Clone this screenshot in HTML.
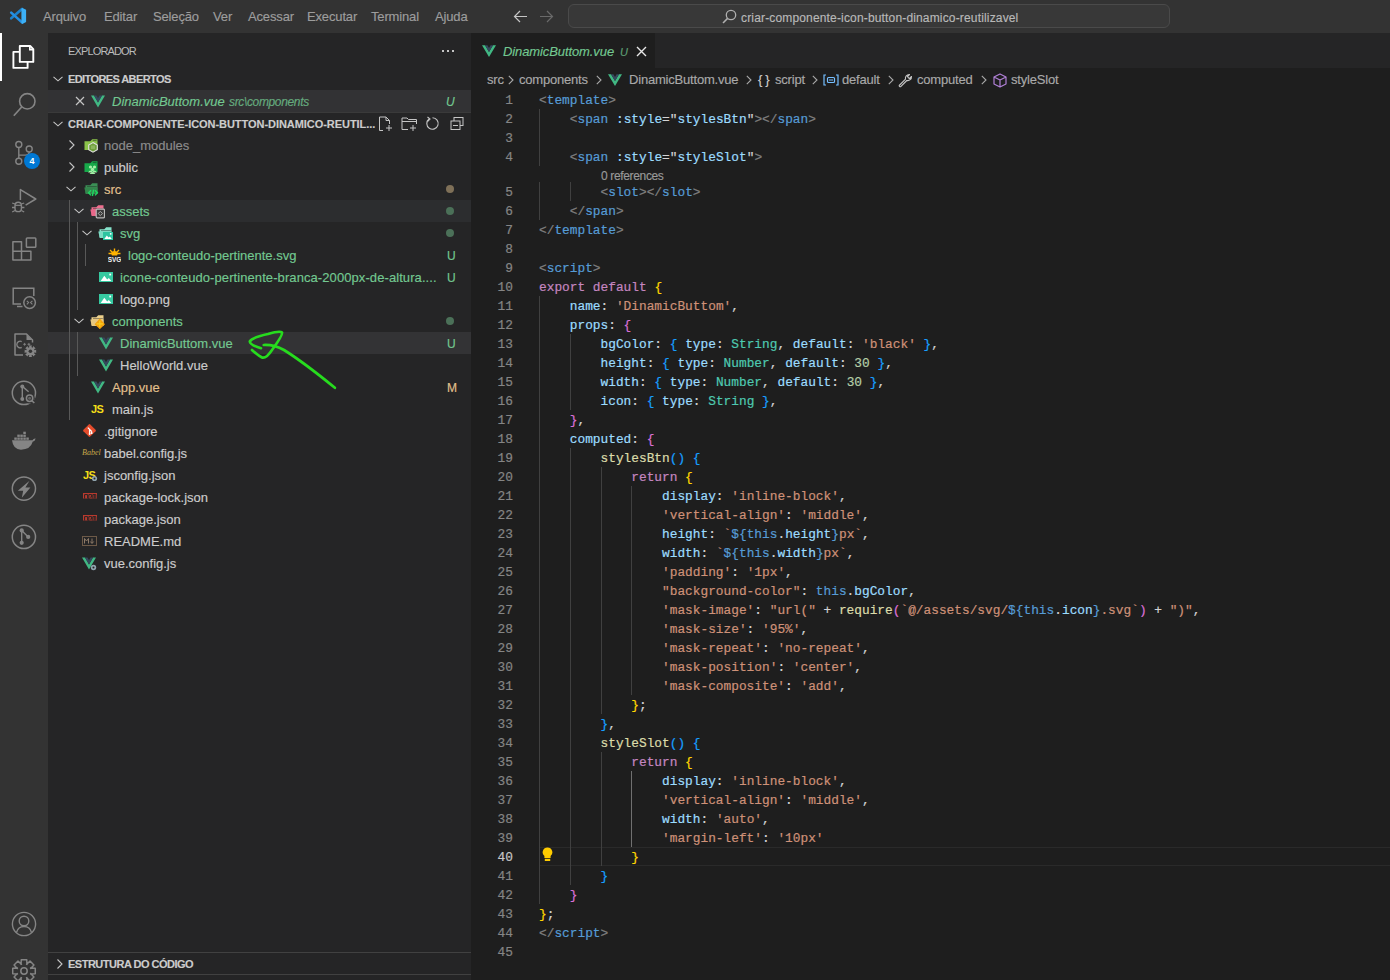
<!DOCTYPE html>
<html><head><meta charset="utf-8"><title>VS Code</title>
<style>
*{margin:0;padding:0;box-sizing:border-box}
html,body{width:1390px;height:980px;overflow:hidden;background:#1e1e1e;font-family:"Liberation Sans",sans-serif;position:relative}
div,span.a{position:absolute}
#title{left:0;top:0;width:1390px;height:33px;background:#333333}
#act{left:0;top:33px;width:48px;height:947px;background:#333333}
#side{left:48px;top:33px;width:423px;height:947px;background:#252526}
#tabs{left:471px;top:33px;width:919px;height:35px;background:#252526}
#editor{left:471px;top:68px;width:919px;height:912px;background:#1e1e1e}
#code{left:0;top:0;width:1390px;height:980px}
.cl{left:539px;height:19px;line-height:19px;font-family:"Liberation Mono",monospace;font-size:12.825px;color:#d4d4d4;white-space:pre}
.ln{left:479px;width:34px;text-align:right;height:19px;line-height:19px;font-family:"Liberation Mono",monospace;font-size:12.825px;color:#858585;white-space:pre}
.ln.act{color:#c6c6c6}
.ig{width:1px;background:#404040}
.iga{background:#707070}
.p{color:#808080}.tg{color:#569cd6}.at{color:#9cdcfe}.s{color:#ce9178}.kw{color:#c586c0}.pr{color:#9cdcfe}.ty{color:#4ec9b0}.n{color:#b5cea8}.fn{color:#dcdcaa}.b1{color:#ffd700}.b2{color:#da70d6}.b3{color:#179fff}.th{color:#569cd6}

.cl,.ln{-webkit-text-stroke:0.2px currentColor}
.tx{-webkit-text-stroke:0.15px currentColor}

</style></head>
<body>
<div id="title"></div>
<div id="act"></div>
<div id="side"></div>
<div id="tabs"></div>
<div id="editor"></div>
<svg style="position:absolute;left:5px;top:4px" width="26" height="24" viewBox="5 4 26 24"><path d="M11.2 18.3 L22 8.9" stroke="#1c82cc" stroke-width="2.6" stroke-linecap="round"/><path d="M11.2 12.6 L22 22.4" stroke="#2490e4" stroke-width="2.6" stroke-linecap="round"/><path d="M21.4 8.9 L22.4 7.9 L26.1 9.8 V22 L22.4 23.9 L21.4 23 Z" fill="#3cb0f6"/></svg>
<div class="tx" style="left:43px;top:7px;height:20px;line-height:20px;font-size:13px;color:#9d9d9d;white-space:pre;letter-spacing:-0.15px;">Arquivo</div>
<div class="tx" style="left:104px;top:7px;height:20px;line-height:20px;font-size:13px;color:#9d9d9d;white-space:pre;letter-spacing:-0.15px;">Editar</div>
<div class="tx" style="left:153px;top:7px;height:20px;line-height:20px;font-size:13px;color:#9d9d9d;white-space:pre;letter-spacing:-0.15px;">Seleção</div>
<div class="tx" style="left:213px;top:7px;height:20px;line-height:20px;font-size:13px;color:#9d9d9d;white-space:pre;letter-spacing:-0.15px;">Ver</div>
<div class="tx" style="left:248px;top:7px;height:20px;line-height:20px;font-size:13px;color:#9d9d9d;white-space:pre;letter-spacing:-0.15px;">Acessar</div>
<div class="tx" style="left:307px;top:7px;height:20px;line-height:20px;font-size:13px;color:#9d9d9d;white-space:pre;letter-spacing:-0.15px;">Executar</div>
<div class="tx" style="left:371px;top:7px;height:20px;line-height:20px;font-size:13px;color:#9d9d9d;white-space:pre;letter-spacing:-0.15px;">Terminal</div>
<div class="tx" style="left:435px;top:7px;height:20px;line-height:20px;font-size:13px;color:#9d9d9d;white-space:pre;letter-spacing:-0.15px;">Ajuda</div>
<svg style="position:absolute;left:513px;top:10px" width="15" height="13" viewBox="0 0 15 13"><path d="M7 1 L1.5 6.5 L7 12 M1.5 6.5 H14" fill="none" stroke="#c5c5c5" stroke-width="1.2"/></svg>
<svg style="position:absolute;left:539px;top:10px" width="15" height="13" viewBox="0 0 15 13"><path d="M8 1 L13.5 6.5 L8 12 M13.5 6.5 H1" fill="none" stroke="#6a6a6a" stroke-width="1.2"/></svg>
<div style="left:568px;top:4px;width:602px;height:24px;border:1px solid #4a4a4a;border-radius:6px;background:#383838"></div>
<svg style="position:absolute;left:722px;top:9px" width="15" height="15" viewBox="0 0 15 15"><circle cx="9" cy="6" r="4.7" fill="none" stroke="#b0b0b0" stroke-width="1.3"/><path d="M5.6 9.4 L1 14" stroke="#b0b0b0" stroke-width="1.5"/></svg>
<div class="tx" style="left:741px;top:8px;height:20px;line-height:20px;font-size:12px;color:#b8b8b8;white-space:pre;letter-spacing:0.16px;">criar-componente-icon-button-dinamico-reutilizavel</div>
<div style="left:0;top:33px;width:2px;height:48px;background:#ffffff"></div>
<svg style="position:absolute;left:12px;top:45px" width="24" height="25" viewBox="0 0 24 25"><path d="M7.8 1 H18.2 L21.3 4.1 V16.9 H7.8 Z" fill="none" stroke="#fff" stroke-width="1.9" stroke-linejoin="round"/><path d="M17.8 1.5 V4.6 H21" fill="none" stroke="#fff" stroke-width="1.6"/><path d="M7.8 6.9 H1.4 V22.9 H15.6 V16.9" fill="none" stroke="#fff" stroke-width="1.9" stroke-linejoin="round"/></svg>
<svg style="position:absolute;left:12px;top:90px" width="26" height="28" viewBox="0 0 26 28"><circle cx="15.3" cy="11.3" r="7.7" fill="none" stroke="#858585" stroke-width="1.6"/><path d="M9.9 16.7 L1.8 25.8" stroke="#858585" stroke-width="1.7"/></svg>
<svg style="position:absolute;left:10px;top:138px" width="30" height="30" viewBox="0 0 30 30"><circle cx="8.8" cy="6.5" r="3" fill="none" stroke="#858585" stroke-width="1.4"/><circle cx="8.8" cy="23.3" r="3" fill="none" stroke="#858585" stroke-width="1.4"/><circle cx="19.2" cy="11" r="3" fill="none" stroke="#858585" stroke-width="1.4"/><path d="M8.8 9.5 V20.3 M8.8 17.1 H15.5 Q19.2 17.1 19.2 14" fill="none" stroke="#858585" stroke-width="1.4"/></svg>
<div style="left:24px;top:153px;width:16px;height:16px;border-radius:8px;background:#0078d4;color:#fff;font-size:9px;font-weight:bold;line-height:16px;text-align:center">4</div>
<svg style="position:absolute;left:10px;top:186px" width="28" height="28" viewBox="0 0 28 28"><path d="M10.4 14 V3.6 L25.8 13 L15.6 19.2" fill="none" stroke="#858585" stroke-width="1.5" stroke-linejoin="round"/><rect x="5" y="16.2" width="6.4" height="9.4" rx="3.2" fill="none" stroke="#858585" stroke-width="1.4"/><path d="M5 19.3 H11.4" stroke="#858585" stroke-width="1.2"/><path d="M2.2 17 L5 18 M14.2 17 L11.4 18 M2 21.5 H5 M14.4 21.5 H11.4 M2.2 26 L5 24.5 M14.2 26 L11.4 24.5" stroke="#858585" stroke-width="1.3"/></svg>
<svg style="position:absolute;left:11px;top:236px" width="27" height="26" viewBox="0 0 27 26"><path d="M1.9 5.7 H10.5 V15.2 H19.9 V24 H1.9 Z M1.9 15.2 H10.5 V24" fill="none" stroke="#858585" stroke-width="1.5" stroke-linejoin="round"/><rect x="15.4" y="1.9" width="9.4" height="9.4" rx="0.8" fill="none" stroke="#858585" stroke-width="1.5"/></svg>
<svg style="position:absolute;left:11px;top:286px" width="26" height="24" viewBox="0 0 26 24"><path d="M10 18 H2.2 V2.2 H22.8 V10" fill="none" stroke="#858585" stroke-width="1.5"/><path d="M6 20.5 H11.5" stroke="#858585" stroke-width="1.5"/><circle cx="18.6" cy="16.6" r="5.8" fill="#333333" stroke="#858585" stroke-width="1.5"/><path d="M15.8 14.8 L17.6 16.6 L15.8 18.4 M21.4 14.8 L19.6 16.6 L21.4 18.4" fill="none" stroke="#858585" stroke-width="1.1"/></svg>
<svg style="position:absolute;left:13px;top:332px" width="24" height="26" viewBox="0 0 24 26"><path d="M10 23 H2 V2 H13.5 L19.5 8 V10.5" fill="none" stroke="#858585" stroke-width="1.5" stroke-linejoin="round"/><path d="M13.5 2.5 V8 H19" fill="#858585"/><path d="M8.7 9.6 A3.3 3.3 0 1 0 8.7 15.4" fill="none" stroke="#858585" stroke-width="1.3"/><path d="M10.2 12.3 H13 M11.6 10.9 V13.7 M14.5 12.3 H17.3 M15.9 10.9 V13.7" stroke="#858585" stroke-width="0.9"/><path d="M16.44 15.11 L15.74 13.53 L19.06 13.53 L18.36 15.11 L19.69 15.66 L20.30 14.05 L22.65 16.40 L21.04 17.01 L21.59 18.34 L23.17 17.64 L23.17 20.96 L21.59 20.26 L21.04 21.59 L22.65 22.20 L20.30 24.55 L19.69 22.94 L18.36 23.49 L19.06 25.07 L15.74 25.07 L16.44 23.49 L15.11 22.94 L14.50 24.55 L12.15 22.20 L13.76 21.59 L13.21 20.26 L11.63 20.96 L11.63 17.64 L13.21 18.34 L13.76 17.01 L12.15 16.40 L14.50 14.05 L15.11 15.66 Z" fill="#858585"/><circle cx="17.4" cy="19.3" r="1.8" fill="#333333"/></svg>
<svg style="position:absolute;left:11px;top:380px" width="27" height="27" viewBox="0 0 27 27"><circle cx="12.9" cy="12.9" r="11.6" fill="none" stroke="#858585" stroke-width="1.5"/><circle cx="11.3" cy="6.4" r="2" fill="#858585"/><circle cx="11.3" cy="19" r="2" fill="#858585"/><path d="M11.3 6.4 V19 M11.3 6.4 L17.6 11.8" stroke="#858585" stroke-width="1.4"/><circle cx="18.6" cy="18.2" r="5.2" fill="#333333"/><circle cx="18.6" cy="18.2" r="3.2" fill="none" stroke="#858585" stroke-width="1.5"/><circle cx="18.6" cy="18.2" r="1.5" fill="#858585" opacity="0.6"/><path d="M21 20.7 L23.3 23" stroke="#858585" stroke-width="1.6"/></svg>
<svg style="position:absolute;left:11px;top:431px" width="26" height="20" viewBox="0 0 26 20"><path d="M1 9.3 H21.5 Q22.5 7.2 24.6 7.5 L23.8 9.6 Q22.8 10.6 21.8 10.6 Q19.5 18.7 10 18.7 Q2.2 18.7 1 9.3 Z" fill="#858585"/><g fill="#858585"><rect x="3.3" y="6.5" width="2.5" height="2.3"/><rect x="6.3" y="6.5" width="2.5" height="2.3"/><rect x="9.3" y="6.5" width="2.5" height="2.3"/><rect x="12.3" y="6.5" width="2.5" height="2.3"/><rect x="15.3" y="6.5" width="2.5" height="2.3"/><rect x="6.3" y="3.6" width="2.5" height="2.3"/><rect x="9.3" y="3.6" width="2.5" height="2.3"/><rect x="12.3" y="3.6" width="2.5" height="2.3"/><rect x="12.3" y="0.7" width="2.5" height="2.3"/></g></svg>
<svg style="position:absolute;left:11px;top:476px" width="26" height="26" viewBox="0 0 26 26"><circle cx="12.9" cy="12.6" r="11.6" fill="none" stroke="#858585" stroke-width="1.5"/><path d="M18.5 4.8 L6.8 14.8 H12.2 L10.8 21.8 L19.4 11.6 H14.4 Z" fill="#858585"/></svg>
<svg style="position:absolute;left:11px;top:524px" width="26" height="26" viewBox="0 0 26 26"><circle cx="12.9" cy="12.9" r="11.6" fill="none" stroke="#858585" stroke-width="1.5"/><circle cx="10.7" cy="6.4" r="2.1" fill="#858585"/><circle cx="10.7" cy="18.8" r="2.1" fill="#858585"/><circle cx="17.2" cy="12.9" r="2.1" fill="#858585"/><path d="M10.7 6.4 V18.8 M10.7 6.4 L17.2 12.9" stroke="#858585" stroke-width="1.4"/></svg>
<svg style="position:absolute;left:11px;top:911px" width="26" height="26" viewBox="0 0 26 26"><circle cx="13" cy="13" r="11.6" fill="none" stroke="#858585" stroke-width="1.4"/><circle cx="13" cy="10" r="4.8" fill="none" stroke="#858585" stroke-width="1.4"/><path d="M5.5 21.5 Q7 15.5 13 15.5 Q19 15.5 20.5 21.5" fill="none" stroke="#858585" stroke-width="1.4"/></svg>
<svg style="position:absolute;left:11px;top:958px" width="26" height="26" viewBox="0 0 26 26"><path d="M19.57 10.06 L24.27 10.24 L24.27 15.76 L19.57 15.94 L19.65 15.76 L19.72 15.57 L22.92 19.02 L19.02 22.92 L15.57 19.72 L15.76 19.65 L15.94 19.57 L15.76 24.27 L10.24 24.27 L10.06 19.57 L10.24 19.65 L10.43 19.72 L6.98 22.92 L3.08 19.02 L6.28 15.57 L6.35 15.76 L6.43 15.94 L1.73 15.76 L1.73 10.24 L6.43 10.06 L6.35 10.24 L6.28 10.43 L3.08 6.98 L6.98 3.08 L10.43 6.28 L10.24 6.35 L10.06 6.43 L10.24 1.73 L15.76 1.73 L15.94 6.43 L15.76 6.35 L15.57 6.28 L19.02 3.08 L22.92 6.98 L19.72 10.43 L19.65 10.24 Z" fill="none" stroke="#858585" stroke-width="1.5" stroke-linejoin="round"/><circle cx="13" cy="13" r="3.2" fill="none" stroke="#858585" stroke-width="1.5"/></svg>
<div style="left:471px;top:33px;width:184px;height:35px;background:#1e1e1e"></div>
<svg style="position:absolute;left:482px;top:45px" width="14" height="12" viewBox="0 0 14 12"><path d="M0 0.3 H3 L7 7 L11 0.3 H14 L7 12 Z" fill="#41b883"/><path d="M3 0.3 H5.4 L7 3 L8.6 0.3 H11 L7 7 Z" fill="#35495e"/></svg>
<div class="tx" style="left:503px;top:42px;height:20px;line-height:20px;font-size:13px;color:#73c991;white-space:pre;font-style:italic;letter-spacing:-0.1px;">DinamicButtom.vue</div>
<div class="tx" style="left:620px;top:42px;height:20px;line-height:20px;font-size:11px;color:#73c991;white-space:pre;font-style:italic;opacity:0.75;">U</div>
<svg style="position:absolute;left:636px;top:46px" width="11" height="11" viewBox="0 0 11 11"><path d="M1 1 L10 10 M10 1 L1 10" stroke="#e8e8e8" stroke-width="1.4"/></svg>
<div class="tx" style="left:487px;top:70px;height:20px;line-height:20px;font-size:13px;color:#a9a9a9;white-space:pre;letter-spacing:-0.2px;">src</div>
<svg style="position:absolute;left:508px;top:75px" width="6" height="10" viewBox="0 0 6 10"><path d="M0.8 0.8 L5 5 L0.8 9.2" fill="none" stroke="#a9a9a9" stroke-width="1.1"/></svg>
<div class="tx" style="left:519px;top:70px;height:20px;line-height:20px;font-size:13px;color:#a9a9a9;white-space:pre;letter-spacing:-0.2px;">components</div>
<svg style="position:absolute;left:596px;top:75px" width="6" height="10" viewBox="0 0 6 10"><path d="M0.8 0.8 L5 5 L0.8 9.2" fill="none" stroke="#a9a9a9" stroke-width="1.1"/></svg>
<svg style="position:absolute;left:608px;top:74px" width="14" height="12" viewBox="0 0 14 12"><path d="M0 0.3 H3 L7 7 L11 0.3 H14 L7 12 Z" fill="#41b883"/><path d="M3 0.3 H5.4 L7 3 L8.6 0.3 H11 L7 7 Z" fill="#35495e"/></svg>
<div class="tx" style="left:629px;top:70px;height:20px;line-height:20px;font-size:13px;color:#a9a9a9;white-space:pre;letter-spacing:-0.2px;">DinamicButtom.vue</div>
<svg style="position:absolute;left:746px;top:75px" width="6" height="10" viewBox="0 0 6 10"><path d="M0.8 0.8 L5 5 L0.8 9.2" fill="none" stroke="#a9a9a9" stroke-width="1.1"/></svg>
<div class="tx" style="left:758px;top:70px;height:20px;line-height:20px;font-size:13px;color:#d0d0d0;white-space:pre;letter-spacing:-0.3px;">{ }</div>
<div class="tx" style="left:775px;top:70px;height:20px;line-height:20px;font-size:13px;color:#a9a9a9;white-space:pre;letter-spacing:-0.2px;">script</div>
<svg style="position:absolute;left:812px;top:75px" width="6" height="10" viewBox="0 0 6 10"><path d="M0.8 0.8 L5 5 L0.8 9.2" fill="none" stroke="#a9a9a9" stroke-width="1.1"/></svg>
<svg style="position:absolute;left:823px;top:74px" width="16" height="12" viewBox="0 0 16 12"><path d="M3 1 H1 V11 H3 M13 1 H15 V11 H13" fill="none" stroke="#75beff" stroke-width="1.2"/><rect x="4.5" y="3.5" width="7" height="5" rx="1" fill="none" stroke="#75beff" stroke-width="1.2"/><path d="M6 6 H10" stroke="#75beff"/></svg>
<div class="tx" style="left:842px;top:70px;height:20px;line-height:20px;font-size:13px;color:#a9a9a9;white-space:pre;letter-spacing:-0.2px;">default</div>
<svg style="position:absolute;left:888px;top:75px" width="6" height="10" viewBox="0 0 6 10"><path d="M0.8 0.8 L5 5 L0.8 9.2" fill="none" stroke="#a9a9a9" stroke-width="1.1"/></svg>
<svg style="position:absolute;left:898px;top:73px" width="15" height="15" viewBox="0 0 15 15"><path d="M13.5 3.5 A3.8 3.8 0 0 1 8.8 7.5 L2.5 13.8 A1.2 1.2 0 0 1 1.2 12.5 L7.5 6.2 A3.8 3.8 0 0 1 11.5 1.5 L9.5 3.5 L10.3 4.7 L11.5 5.5 Z" fill="none" stroke="#c5c5c5" stroke-width="1.1" stroke-linejoin="round"/></svg>
<div class="tx" style="left:917px;top:70px;height:20px;line-height:20px;font-size:13px;color:#a9a9a9;white-space:pre;letter-spacing:-0.2px;">computed</div>
<svg style="position:absolute;left:981px;top:75px" width="6" height="10" viewBox="0 0 6 10"><path d="M0.8 0.8 L5 5 L0.8 9.2" fill="none" stroke="#a9a9a9" stroke-width="1.1"/></svg>
<svg style="position:absolute;left:993px;top:73px" width="14" height="15" viewBox="0 0 14 15"><path d="M7 1 L13 4 V11 L7 14 L1 11 V4 Z M1 4 L7 7 L13 4 M7 7 V14" fill="none" stroke="#b180d7" stroke-width="1.2" stroke-linejoin="round"/></svg>
<div class="tx" style="left:1011px;top:70px;height:20px;line-height:20px;font-size:13px;color:#a9a9a9;white-space:pre;letter-spacing:-0.2px;">styleSlot</div>
<div class="tx" style="left:601px;top:166px;height:20px;line-height:20px;font-size:12px;color:#999999;white-space:pre;letter-spacing:-0.35px;">0 references</div>
<div style="left:539px;top:847px;width:851px;height:19px;border-top:1px solid #2a2a2a;border-bottom:1px solid #2a2a2a"></div>
<svg style="position:absolute;left:542px;top:847px" width="11" height="15" viewBox="0 0 11 15"><path d="M5.5 0.5 A4.8 4.8 0 0 1 8.6 9 V11 H2.4 V9 A4.8 4.8 0 0 1 5.5 0.5 Z" fill="#ffcc00"/><rect x="2.8" y="11.8" width="5.4" height="2.2" fill="#ffcc00"/></svg>
<div class="tx" style="left:68px;top:41px;height:20px;line-height:20px;font-size:11px;color:#bbbbbb;white-space:pre;letter-spacing:-0.85px;-webkit-text-stroke:0;">EXPLORADOR</div>
<div style="left:442px;top:50px;width:2px;height:2px;background:#c5c5c5"></div>
<div style="left:447px;top:50px;width:2px;height:2px;background:#c5c5c5"></div>
<div style="left:452px;top:50px;width:2px;height:2px;background:#c5c5c5"></div>
<svg style="position:absolute;left:53px;top:76px" width="10" height="6" viewBox="0 0 10 6"><path d="M0.5 0.8 L5 4.8 L9.5 0.8" fill="none" stroke="#c5c5c5" stroke-width="1.1"/></svg>
<div class="tx" style="left:68px;top:69px;height:20px;line-height:20px;font-size:11px;color:#cccccc;white-space:pre;font-weight:bold;letter-spacing:-0.6px;">EDITORES ABERTOS</div>
<div style="left:48px;top:90px;width:423px;height:22px;background:#323234"></div>
<svg style="position:absolute;left:75px;top:96px" width="10" height="10" viewBox="0 0 10 10"><path d="M1 1 L9 9 M9 1 L1 9" stroke="#c5c5c5" stroke-width="1.2"/></svg>
<svg style="position:absolute;left:91px;top:95px" width="14" height="13" viewBox="0 0 14 13"><path d="M0 0.5 H3 L7 7.5 L11 0.5 H14 L7 12.5 Z" fill="#41b883"/><path d="M3 0.5 H5.4 L7 3.3 L8.6 0.5 H11 L7 7.5 Z" fill="#35495e"/></svg>
<div class="tx" style="left:112px;top:92px;height:20px;line-height:20px;font-size:13px;color:#73c991;white-space:pre;font-style:italic;">DinamicButtom.vue</div>
<div class="tx" style="left:229px;top:92px;height:20px;line-height:20px;font-size:12px;color:#73c991;white-space:pre;font-style:italic;letter-spacing:-0.35px;opacity:0.8;">src\components</div>
<div class="tx" style="left:446px;top:92px;height:20px;line-height:20px;font-size:12px;color:#73c991;white-space:pre;font-style:italic;">U</div>
<div style="left:48px;top:112px;width:423px;height:1px;background:#3a3a3a"></div>
<svg style="position:absolute;left:53px;top:121px" width="10" height="6" viewBox="0 0 10 6"><path d="M0.5 0.8 L5 4.8 L9.5 0.8" fill="none" stroke="#c5c5c5" stroke-width="1.1"/></svg>
<div class="tx" style="left:68px;top:114px;height:20px;line-height:20px;font-size:11px;color:#cccccc;white-space:pre;font-weight:bold;letter-spacing:-0.05px;">CRIAR-COMPONENTE-ICON-BUTTON-DINAMICO-REUTIL...</div>
<svg style="position:absolute;left:378px;top:116px" width="16" height="16" viewBox="0 0 16 16"><path d="M1.5 1 H8 L11.5 4.5 V8 M8 1 V4.5 H11.5 M5 14.5 H1.5 V1" fill="none" stroke="#c5c5c5" stroke-width="1"/><path d="M11 9 V15 M8 12 H14" stroke="#c5c5c5" stroke-width="1"/></svg>
<svg style="position:absolute;left:401px;top:116px" width="17" height="16" viewBox="0 0 17 16"><path d="M1 13.5 V2 H6 L7.5 3.5 H15.5 V8 M1 5.5 H15.5 M1 13.5 H7" fill="none" stroke="#c5c5c5" stroke-width="1"/><path d="M12 9 V15 M9 12 H15" stroke="#c5c5c5" stroke-width="1"/></svg>
<svg style="position:absolute;left:425px;top:116px" width="15" height="15" viewBox="0 0 15 15"><path d="M4 3 A5.7 5.7 0 1 0 7.5 1.8" fill="none" stroke="#c5c5c5" stroke-width="1.1"/><path d="M2.5 1 L5 3 L2.5 5.5" fill="none" stroke="#c5c5c5" stroke-width="1.1"/></svg>
<svg style="position:absolute;left:450px;top:116px" width="14" height="15" viewBox="0 0 14 15"><rect x="4" y="1.5" width="9" height="8" fill="none" stroke="#c5c5c5" stroke-width="1"/><rect x="1" y="5" width="9" height="8.5" fill="#252526" stroke="#c5c5c5" stroke-width="1"/><path d="M3 9.5 H8" stroke="#c5c5c5"/></svg>
<div style="left:48px;top:200px;width:423px;height:22px;background:#2c2d2f"></div>
<div style="left:48px;top:332px;width:423px;height:22px;background:#333335"></div>
<div style="left:69px;top:200px;width:1px;height:220px;background:#585858"></div>
<div style="left:77px;top:222px;width:1px;height:88px;background:#585858"></div>
<div style="left:77px;top:332px;width:1px;height:44px;background:#585858"></div>
<div style="left:85px;top:244px;width:1px;height:22px;background:#585858"></div>
<svg style="position:absolute;left:68px;top:140px" width="7" height="10" viewBox="0 0 7 10"><path d="M1.5 0.5 L6 5 L1.5 9.5" fill="none" stroke="#c5c5c5" stroke-width="1.1"/></svg>
<svg style="position:absolute;left:84px;top:138px" width="15" height="15" viewBox="0 0 15 15"><path d="M0.5 3.2 H6.3 L8.2 1.3 H13.5 V12 H0.5 Z" fill="#8bc34a"/><path d="M8.8 2.6 H12.6" stroke="#1e1e1e" stroke-width="0.9" opacity="0.55"/><path d="M9 4.6 L13.3 7 V11.8 L9 14.2 L4.7 11.8 V7 Z" fill="#6f9f3c" stroke="#e0e0e0" stroke-width="1.1"/><path d="M8 7.5 V11 M10 7.5 V11" stroke="#b8d890" stroke-width="0.8"/></svg>
<div class="tx" style="left:104px;top:136px;height:20px;line-height:20px;font-size:13px;color:#8c8c8c;white-space:pre;">node_modules</div>
<svg style="position:absolute;left:68px;top:162px" width="7" height="10" viewBox="0 0 7 10"><path d="M1.5 0.5 L6 5 L1.5 9.5" fill="none" stroke="#c5c5c5" stroke-width="1.1"/></svg>
<svg style="position:absolute;left:84px;top:160px" width="15" height="15" viewBox="0 0 15 15"><path d="M0.5 3.2 H6.3 L8.2 1.3 H13.5 V12 H0.5 Z" fill="#17a94a"/><path d="M8.8 2.6 H12.6" stroke="#1e1e1e" stroke-width="0.9" opacity="0.55"/><circle cx="6.5" cy="7" r="1.6" fill="#a5f0a8"/><circle cx="10.5" cy="7" r="1.6" fill="#a5f0a8"/><path d="M4 12.5 Q6.5 8.5 9 12.5 Z M8 12.5 Q10.5 8.5 13 12.5 Z" fill="#a5f0a8"/><circle cx="8.5" cy="9.5" r="1.7" fill="#a5f0a8"/><path d="M5.5 14 Q8.5 10 11.5 14 Z" fill="#a5f0a8"/></svg>
<div class="tx" style="left:104px;top:158px;height:20px;line-height:20px;font-size:13px;color:#cccccc;white-space:pre;">public</div>
<svg style="position:absolute;left:66px;top:186px" width="10" height="6" viewBox="0 0 10 6"><path d="M0.5 0.8 L5 4.8 L9.5 0.8" fill="none" stroke="#c5c5c5" stroke-width="1.1"/></svg>
<svg style="position:absolute;left:84px;top:182px" width="15" height="15" viewBox="0 0 15 15"><path d="M1.5 3.2 H6.3 L8.2 1.3 H13.5 V11.5 H1.5 Z" fill="#3b8f55"/><path d="M3 4.6 H12.8" stroke="#1e1e1e" stroke-width="0.9" opacity="0.5"/><path d="M0.3 5.6 H13.5 V12 H1.8 Z" fill="#34844c"/><path d="M7 8.2 L4.6 10.8 L7 13.4 M11 8.2 L13.4 10.8 L11 13.4 M9.6 7.6 L8.4 14" fill="none" stroke="#1ed760" stroke-width="1.4"/></svg>
<div class="tx" style="left:104px;top:180px;height:20px;line-height:20px;font-size:13px;color:#e2c08d;white-space:pre;">src</div>
<div style="left:446px;top:185px;width:8px;height:8px;border-radius:4px;background:#7f7058"></div>
<svg style="position:absolute;left:74px;top:208px" width="10" height="6" viewBox="0 0 10 6"><path d="M0.5 0.8 L5 4.8 L9.5 0.8" fill="none" stroke="#c5c5c5" stroke-width="1.1"/></svg>
<svg style="position:absolute;left:90px;top:204px" width="15" height="15" viewBox="0 0 15 15"><path d="M1.5 3.2 H6.3 L8.2 1.3 H13.5 V11.5 H1.5 Z" fill="#ee7090"/><path d="M3 4.6 H12.8" stroke="#1e1e1e" stroke-width="0.9" opacity="0.5"/><path d="M0.3 5.6 H13.5 V12 H1.8 Z" fill="#e8688a"/><rect x="6.2" y="5.2" width="8.3" height="8.6" rx="1" fill="#3a3a3a" stroke="#b8b8b8" stroke-width="1.2"/><path d="M10.3 7.4 L12.4 9.5 L10.3 11.6 L8.2 9.5 Z" fill="none" stroke="#b8b8b8" stroke-width="0.9"/></svg>
<div class="tx" style="left:112px;top:202px;height:20px;line-height:20px;font-size:13px;color:#73c991;white-space:pre;">assets</div>
<div style="left:446px;top:207px;width:8px;height:8px;border-radius:4px;background:#4b7058"></div>
<svg style="position:absolute;left:82px;top:230px" width="10" height="6" viewBox="0 0 10 6"><path d="M0.5 0.8 L5 4.8 L9.5 0.8" fill="none" stroke="#c5c5c5" stroke-width="1.1"/></svg>
<svg style="position:absolute;left:98px;top:226px" width="15" height="15" viewBox="0 0 15 15"><path d="M1.5 3.2 H6.3 L8.2 1.3 H13.5 V11.5 H1.5 Z" fill="#86e3cc"/><path d="M3 4.6 H12.8" stroke="#1e1e1e" stroke-width="0.9" opacity="0.5"/><path d="M0.3 5.6 H13.5 V12 H1.8 Z" fill="#7ddcc4"/><rect x="5" y="6" width="10" height="8" fill="#2ec4a0"/><path d="M6.3 13 L8.8 9.6 L10.6 11.6 L11.9 10.4 L13.8 13 Z" fill="#ffffff"/><circle cx="12.7" cy="7.8" r="0.9" fill="#ffffff"/></svg>
<div class="tx" style="left:120px;top:224px;height:20px;line-height:20px;font-size:13px;color:#73c991;white-space:pre;">svg</div>
<div style="left:446px;top:229px;width:8px;height:8px;border-radius:4px;background:#4b7058"></div>
<svg style="position:absolute;left:108px;top:248px" width="13" height="14" viewBox="0 0 13 14"><path d="M6.5 0.5 V5 M2 2 L5 5 M11 2 L8 5 M0.5 5.5 H12.5" stroke="#ffb300" stroke-width="1.4"/><circle cx="6.5" cy="6" r="3" fill="#ffb300"/><rect x="0" y="7.5" width="13" height="6.5" fill="#252526"/><text x="6.5" y="13.5" font-family="Liberation Sans" font-size="6.5" font-weight="bold" fill="#f0f0f0" text-anchor="middle">SVG</text></svg>
<div class="tx" style="left:128px;top:246px;height:20px;line-height:20px;font-size:13px;color:#73c991;white-space:pre;">logo-conteudo-pertinente.svg</div>
<div class="tx" style="left:447px;top:246px;height:20px;line-height:20px;font-size:12px;color:#73c991;white-space:pre;">U</div>
<svg style="position:absolute;left:99px;top:272px" width="14" height="10" viewBox="0 0 14 10"><rect x="0" y="0" width="14" height="10" fill="#36c9a0"/><path d="M1.7 9 L5.3 3.8 L8.2 7.6 L9.8 5.9 L12.4 9 Z" fill="#ffffff"/><rect x="10.3" y="1.6" width="1.8" height="1.8" fill="#ffffff"/></svg>
<div class="tx" style="left:120px;top:268px;height:20px;line-height:20px;font-size:13px;color:#73c991;white-space:pre;letter-spacing:0.085px;">icone-conteudo-pertinente-branca-2000px-de-altura....</div>
<div class="tx" style="left:447px;top:268px;height:20px;line-height:20px;font-size:12px;color:#73c991;white-space:pre;">U</div>
<svg style="position:absolute;left:99px;top:294px" width="14" height="10" viewBox="0 0 14 10"><rect x="0" y="0" width="14" height="10" fill="#36c9a0"/><path d="M1.7 9 L5.3 3.8 L8.2 7.6 L9.8 5.9 L12.4 9 Z" fill="#ffffff"/><rect x="10.3" y="1.6" width="1.8" height="1.8" fill="#ffffff"/></svg>
<div class="tx" style="left:120px;top:290px;height:20px;line-height:20px;font-size:13px;color:#cccccc;white-space:pre;">logo.png</div>
<svg style="position:absolute;left:74px;top:318px" width="10" height="6" viewBox="0 0 10 6"><path d="M0.5 0.8 L5 4.8 L9.5 0.8" fill="none" stroke="#c5c5c5" stroke-width="1.1"/></svg>
<svg style="position:absolute;left:90px;top:314px" width="15" height="15" viewBox="0 0 15 15"><path d="M1.5 3.2 H6.3 L8.2 1.3 H13.5 V11.5 H1.5 Z" fill="#ecd08c"/><path d="M3 4.6 H12.8" stroke="#1e1e1e" stroke-width="0.9" opacity="0.5"/><path d="M0.3 5.6 H13.5 V12 H1.8 Z" fill="#e8c880"/><path d="M9.8 4.6 L15 10.2 L9.8 15.2 L4.6 10.2 Z" fill="#f5a20c"/><path d="M6.5 9.8 H13 M9.8 6.8 V13" stroke="#f8d020" stroke-width="1.2"/></svg>
<div class="tx" style="left:112px;top:312px;height:20px;line-height:20px;font-size:13px;color:#73c991;white-space:pre;">components</div>
<div style="left:446px;top:317px;width:8px;height:8px;border-radius:4px;background:#4b7058"></div>
<svg style="position:absolute;left:99px;top:337px" width="14" height="13" viewBox="0 0 14 13"><path d="M0 0.5 H3 L7 7.5 L11 0.5 H14 L7 12.5 Z" fill="#41b883"/><path d="M3 0.5 H5.4 L7 3.3 L8.6 0.5 H11 L7 7.5 Z" fill="#35495e"/></svg>
<div class="tx" style="left:120px;top:334px;height:20px;line-height:20px;font-size:13px;color:#73c991;white-space:pre;">DinamicButtom.vue</div>
<div class="tx" style="left:447px;top:334px;height:20px;line-height:20px;font-size:12px;color:#73c991;white-space:pre;">U</div>
<svg style="position:absolute;left:99px;top:359px" width="14" height="13" viewBox="0 0 14 13"><path d="M0 0.5 H3 L7 7.5 L11 0.5 H14 L7 12.5 Z" fill="#41b883"/><path d="M3 0.5 H5.4 L7 3.3 L8.6 0.5 H11 L7 7.5 Z" fill="#35495e"/></svg>
<div class="tx" style="left:120px;top:356px;height:20px;line-height:20px;font-size:13px;color:#cccccc;white-space:pre;">HelloWorld.vue</div>
<svg style="position:absolute;left:91px;top:381px" width="14" height="13" viewBox="0 0 14 13"><path d="M0 0.5 H3 L7 7.5 L11 0.5 H14 L7 12.5 Z" fill="#41b883"/><path d="M3 0.5 H5.4 L7 3.3 L8.6 0.5 H11 L7 7.5 Z" fill="#35495e"/></svg>
<div class="tx" style="left:112px;top:378px;height:20px;line-height:20px;font-size:13px;color:#e2c08d;white-space:pre;">App.vue</div>
<div class="tx" style="left:447px;top:378px;height:20px;line-height:20px;font-size:12px;color:#e2c08d;white-space:pre;">M</div>
<div style="left:91px;top:401px;height:16px;line-height:16px;font-size:11px;font-weight:bold;color:#f5de19;letter-spacing:-0.5px">JS</div>
<div class="tx" style="left:112px;top:400px;height:20px;line-height:20px;font-size:13px;color:#cccccc;white-space:pre;">main.js</div>
<svg style="position:absolute;left:82px;top:423px" width="15" height="15" viewBox="0 0 15 15"><rect x="2.7" y="2.7" width="9.6" height="9.6" rx="1" transform="rotate(45 7.5 7.5)" fill="#e44c2c"/><path d="M5.8 4.6 L9.6 8.4 M7.6 6.4 V11 M9.6 8.4 V10.2" stroke="#ffffff" stroke-width="1.3"/><circle cx="7.6" cy="11" r="0.9" fill="#fff"/><circle cx="9.6" cy="10.2" r="0.9" fill="#fff"/></svg>
<div class="tx" style="left:104px;top:422px;height:20px;line-height:20px;font-size:13px;color:#cccccc;white-space:pre;">.gitignore</div>
<div style="left:82px;top:446px;height:14px;line-height:14px;font-size:8px;font-style:italic;color:#c9a84a;font-family:'Liberation Serif',serif">Babel</div>
<div class="tx" style="left:104px;top:444px;height:20px;line-height:20px;font-size:13px;color:#cccccc;white-space:pre;">babel.config.js</div>
<div style="left:83px;top:467px;height:16px;line-height:16px;font-size:11px;font-weight:bold;color:#f5de19;letter-spacing:-0.5px">JS</div>
<svg style="position:absolute;left:91px;top:475px" width="7" height="7" viewBox="0 0 7 7"><circle cx="3.5" cy="3.5" r="2.6" fill="#90a4ae"/><circle cx="3.5" cy="3.5" r="1" fill="#252526"/></svg>
<div class="tx" style="left:104px;top:466px;height:20px;line-height:20px;font-size:13px;color:#cccccc;white-space:pre;">jsconfig.json</div>
<svg style="position:absolute;left:83px;top:493px" width="14" height="7" viewBox="0 0 14 7"><rect x="0" y="0" width="14" height="5.5" fill="#b93a2e"/><path d="M1.6 5.5 V1.6 H4.6 V5.5 M5.8 7 V1.6 H8.6 V4.2 H7.2 M9.8 5.5 V1.6 H12.8 V5.5 M11.3 1.6 V5.5" fill="none" stroke="#252526" stroke-width="1"/></svg>
<svg style="position:absolute;left:83px;top:515px" width="14" height="7" viewBox="0 0 14 7"><rect x="0" y="0" width="14" height="5.5" fill="#b93a2e"/><path d="M1.6 5.5 V1.6 H4.6 V5.5 M5.8 7 V1.6 H8.6 V4.2 H7.2 M9.8 5.5 V1.6 H12.8 V5.5 M11.3 1.6 V5.5" fill="none" stroke="#252526" stroke-width="1"/></svg>
<div class="tx" style="left:104px;top:488px;height:20px;line-height:20px;font-size:13px;color:#cccccc;white-space:pre;">package-lock.json</div>
<div class="tx" style="left:104px;top:510px;height:20px;line-height:20px;font-size:13px;color:#cccccc;white-space:pre;">package.json</div>
<svg style="position:absolute;left:82px;top:536px" width="15" height="10" viewBox="0 0 15 10"><rect x="0.5" y="0.5" width="14" height="9" fill="none" stroke="#6d5a48" stroke-width="1"/><path d="M2.5 7.5 V2.5 L4.5 5 L6.5 2.5 V7.5 M10 2.5 V7 M8.3 5.5 L10 7.5 L11.7 5.5" fill="none" stroke="#8d7a68" stroke-width="1"/></svg>
<div class="tx" style="left:104px;top:532px;height:20px;line-height:20px;font-size:13px;color:#cccccc;white-space:pre;">README.md</div>
<svg style="position:absolute;left:82px;top:557px" width="14" height="13" viewBox="0 0 14 13"><path d="M0 0.5 H3 L7 7.5 L11 0.5 H14 L7 12.5 Z" fill="#41b883"/><path d="M3 0.5 H5.4 L7 3.3 L8.6 0.5 H11 L7 7.5 Z" fill="#35495e"/></svg>
<svg style="position:absolute;left:90px;top:564px" width="7" height="7" viewBox="0 0 7 7"><circle cx="3.5" cy="3.5" r="2.7" fill="#90a4ae"/><circle cx="3.5" cy="3.5" r="1" fill="#252526"/></svg>
<div class="tx" style="left:104px;top:554px;height:20px;line-height:20px;font-size:13px;color:#cccccc;white-space:pre;">vue.config.js</div>
<div style="left:48px;top:952px;width:423px;height:1px;background:#414141"></div>
<svg style="position:absolute;left:56px;top:959px" width="7" height="10" viewBox="0 0 7 10"><path d="M1.5 0.5 L6 5 L1.5 9.5" fill="none" stroke="#c5c5c5" stroke-width="1.1"/></svg>
<div class="tx" style="left:68px;top:954px;height:20px;line-height:20px;font-size:11px;color:#cccccc;white-space:pre;font-weight:bold;letter-spacing:-0.5px;">ESTRUTURA DO CÓDIGO</div>
<div style="left:48px;top:974px;width:423px;height:1px;background:#414141"></div>
<svg style="position:absolute;left:240px;top:325px" width="110" height="70" viewBox="240 325 110 70"><g fill="none" stroke="#27dc1e" stroke-width="2.7" stroke-linecap="round" stroke-linejoin="round"><path d="M334.9 387.8 C 318 374, 300 360, 284 350 Q 274 344.5, 263.7 345"/><path d="M261 348.2 Q 250 345, 249.8 341.5 Q 252 337.5, 268 334 Q 280 330.5, 282 332.5 Q 283 335, 272 350 Q 266 359, 262 357.5 Q 258 355.5, 252 350"/></g></svg>
<div id="code">
<div class="cl" style="top:91px"><span class="p">&lt;</span><span class="tg">template</span><span class="p">&gt;</span></div>
<div class="ln" style="top:91px">1</div>
<div class="cl" style="top:110px">    <span class="p">&lt;</span><span class="tg">span</span> <span class="at">:style</span>=&quot;<span class="pr">stylesBtn</span>&quot;<span class="p">&gt;&lt;/</span><span class="tg">span</span><span class="p">&gt;</span></div>
<div class="ln" style="top:110px">2</div>
<div class="cl" style="top:129px"></div>
<div class="ln" style="top:129px">3</div>
<div class="cl" style="top:148px">    <span class="p">&lt;</span><span class="tg">span</span> <span class="at">:style</span>=&quot;<span class="pr">styleSlot</span>&quot;<span class="p">&gt;</span></div>
<div class="ln" style="top:148px">4</div>
<div class="cl" style="top:183px">        <span class="p">&lt;</span><span class="tg">slot</span><span class="p">&gt;&lt;/</span><span class="tg">slot</span><span class="p">&gt;</span></div>
<div class="ln" style="top:183px">5</div>
<div class="cl" style="top:202px">    <span class="p">&lt;/</span><span class="tg">span</span><span class="p">&gt;</span></div>
<div class="ln" style="top:202px">6</div>
<div class="cl" style="top:221px"><span class="p">&lt;/</span><span class="tg">template</span><span class="p">&gt;</span></div>
<div class="ln" style="top:221px">7</div>
<div class="cl" style="top:240px"></div>
<div class="ln" style="top:240px">8</div>
<div class="cl" style="top:259px"><span class="p">&lt;</span><span class="tg">script</span><span class="p">&gt;</span></div>
<div class="ln" style="top:259px">9</div>
<div class="cl" style="top:278px"><span class="kw">export</span> <span class="kw">default</span> <span class="b1">{</span></div>
<div class="ln" style="top:278px">10</div>
<div class="cl" style="top:297px">    <span class="pr">name</span>: <span class="s">&#x27;DinamicButtom&#x27;</span>,</div>
<div class="ln" style="top:297px">11</div>
<div class="cl" style="top:316px">    <span class="pr">props</span>: <span class="b2">{</span></div>
<div class="ln" style="top:316px">12</div>
<div class="cl" style="top:335px">        <span class="pr">bgColor</span>: <span class="b3">{</span> <span class="pr">type</span>: <span class="ty">String</span>, <span class="pr">default</span>: <span class="s">&#x27;black&#x27;</span> <span class="b3">}</span>,</div>
<div class="ln" style="top:335px">13</div>
<div class="cl" style="top:354px">        <span class="pr">height</span>: <span class="b3">{</span> <span class="pr">type</span>: <span class="ty">Number</span>, <span class="pr">default</span>: <span class="n">30</span> <span class="b3">}</span>,</div>
<div class="ln" style="top:354px">14</div>
<div class="cl" style="top:373px">        <span class="pr">width</span>: <span class="b3">{</span> <span class="pr">type</span>: <span class="ty">Number</span>, <span class="pr">default</span>: <span class="n">30</span> <span class="b3">}</span>,</div>
<div class="ln" style="top:373px">15</div>
<div class="cl" style="top:392px">        <span class="pr">icon</span>: <span class="b3">{</span> <span class="pr">type</span>: <span class="ty">String</span> <span class="b3">}</span>,</div>
<div class="ln" style="top:392px">16</div>
<div class="cl" style="top:411px">    <span class="b2">}</span>,</div>
<div class="ln" style="top:411px">17</div>
<div class="cl" style="top:430px">    <span class="pr">computed</span>: <span class="b2">{</span></div>
<div class="ln" style="top:430px">18</div>
<div class="cl" style="top:449px">        <span class="fn">stylesBtn</span><span class="b3">()</span> <span class="b3">{</span></div>
<div class="ln" style="top:449px">19</div>
<div class="cl" style="top:468px">            <span class="kw">return</span> <span class="b1">{</span></div>
<div class="ln" style="top:468px">20</div>
<div class="cl" style="top:487px">                <span class="pr">display</span>: <span class="s">&#x27;inline-block&#x27;</span>,</div>
<div class="ln" style="top:487px">21</div>
<div class="cl" style="top:506px">                <span class="s">&#x27;vertical-align&#x27;</span>: <span class="s">&#x27;middle&#x27;</span>,</div>
<div class="ln" style="top:506px">22</div>
<div class="cl" style="top:525px">                <span class="pr">height</span>: <span class="s">`</span><span class="th">${</span><span class="th">this</span>.<span class="pr">height</span><span class="th">}</span><span class="s">px`</span>,</div>
<div class="ln" style="top:525px">23</div>
<div class="cl" style="top:544px">                <span class="pr">width</span>: <span class="s">`</span><span class="th">${</span><span class="th">this</span>.<span class="pr">width</span><span class="th">}</span><span class="s">px`</span>,</div>
<div class="ln" style="top:544px">24</div>
<div class="cl" style="top:563px">                <span class="s">&#x27;padding&#x27;</span>: <span class="s">&#x27;1px&#x27;</span>,</div>
<div class="ln" style="top:563px">25</div>
<div class="cl" style="top:582px">                <span class="s">&quot;background-color&quot;</span>: <span class="th">this</span>.<span class="pr">bgColor</span>,</div>
<div class="ln" style="top:582px">26</div>
<div class="cl" style="top:601px">                <span class="s">&#x27;mask-image&#x27;</span>: <span class="s">&quot;url(&quot;</span> + <span class="fn">require</span><span class="b2">(</span><span class="s">`@/assets/svg/</span><span class="th">${</span><span class="th">this</span>.<span class="pr">icon</span><span class="th">}</span><span class="s">.svg`</span><span class="b2">)</span> + <span class="s">&quot;)&quot;</span>,</div>
<div class="ln" style="top:601px">27</div>
<div class="cl" style="top:620px">                <span class="s">&#x27;mask-size&#x27;</span>: <span class="s">&#x27;95%&#x27;</span>,</div>
<div class="ln" style="top:620px">28</div>
<div class="cl" style="top:639px">                <span class="s">&#x27;mask-repeat&#x27;</span>: <span class="s">&#x27;no-repeat&#x27;</span>,</div>
<div class="ln" style="top:639px">29</div>
<div class="cl" style="top:658px">                <span class="s">&#x27;mask-position&#x27;</span>: <span class="s">&#x27;center&#x27;</span>,</div>
<div class="ln" style="top:658px">30</div>
<div class="cl" style="top:677px">                <span class="s">&#x27;mask-composite&#x27;</span>: <span class="s">&#x27;add&#x27;</span>,</div>
<div class="ln" style="top:677px">31</div>
<div class="cl" style="top:696px">            <span class="b1">}</span>;</div>
<div class="ln" style="top:696px">32</div>
<div class="cl" style="top:715px">        <span class="b3">}</span>,</div>
<div class="ln" style="top:715px">33</div>
<div class="cl" style="top:734px">        <span class="fn">styleSlot</span><span class="b3">()</span> <span class="b3">{</span></div>
<div class="ln" style="top:734px">34</div>
<div class="cl" style="top:753px">            <span class="kw">return</span> <span class="b1">{</span></div>
<div class="ln" style="top:753px">35</div>
<div class="cl" style="top:772px">                <span class="pr">display</span>: <span class="s">&#x27;inline-block&#x27;</span>,</div>
<div class="ln" style="top:772px">36</div>
<div class="cl" style="top:791px">                <span class="s">&#x27;vertical-align&#x27;</span>: <span class="s">&#x27;middle&#x27;</span>,</div>
<div class="ln" style="top:791px">37</div>
<div class="cl" style="top:810px">                <span class="pr">width</span>: <span class="s">&#x27;auto&#x27;</span>,</div>
<div class="ln" style="top:810px">38</div>
<div class="cl" style="top:829px">                <span class="s">&#x27;margin-left&#x27;</span>: <span class="s">&#x27;10px&#x27;</span></div>
<div class="ln" style="top:829px">39</div>
<div class="cl" style="top:848px">            <span class="b1">}</span></div>
<div class="ln act" style="top:848px">40</div>
<div class="cl" style="top:867px">        <span class="b3">}</span></div>
<div class="ln" style="top:867px">41</div>
<div class="cl" style="top:886px">    <span class="b2">}</span></div>
<div class="ln" style="top:886px">42</div>
<div class="cl" style="top:905px"><span class="b1">}</span>;</div>
<div class="ln" style="top:905px">43</div>
<div class="cl" style="top:924px"><span class="p">&lt;/</span><span class="tg">script</span><span class="p">&gt;</span></div>
<div class="ln" style="top:924px">44</div>
<div class="cl" style="top:943px"></div>
<div class="ln" style="top:943px">45</div>
<div class="ig" style="left:539px;top:109px;height:57px"></div>
<div class="ig" style="left:539px;top:182px;height:38px"></div>
<div class="ig" style="left:570px;top:182px;height:19px"></div>
<div class="ig" style="left:539px;top:296px;height:608px"></div>
<div class="ig" style="left:570px;top:334px;height:76px"></div>
<div class="ig" style="left:570px;top:448px;height:437px"></div>
<div class="ig" style="left:601px;top:467px;height:247px"></div>
<div class="ig" style="left:601px;top:752px;height:114px"></div>
<div class="ig" style="left:631px;top:486px;height:209px"></div>
<div class="ig iga" style="left:631px;top:771px;height:76px"></div>
</div>
</body></html>
